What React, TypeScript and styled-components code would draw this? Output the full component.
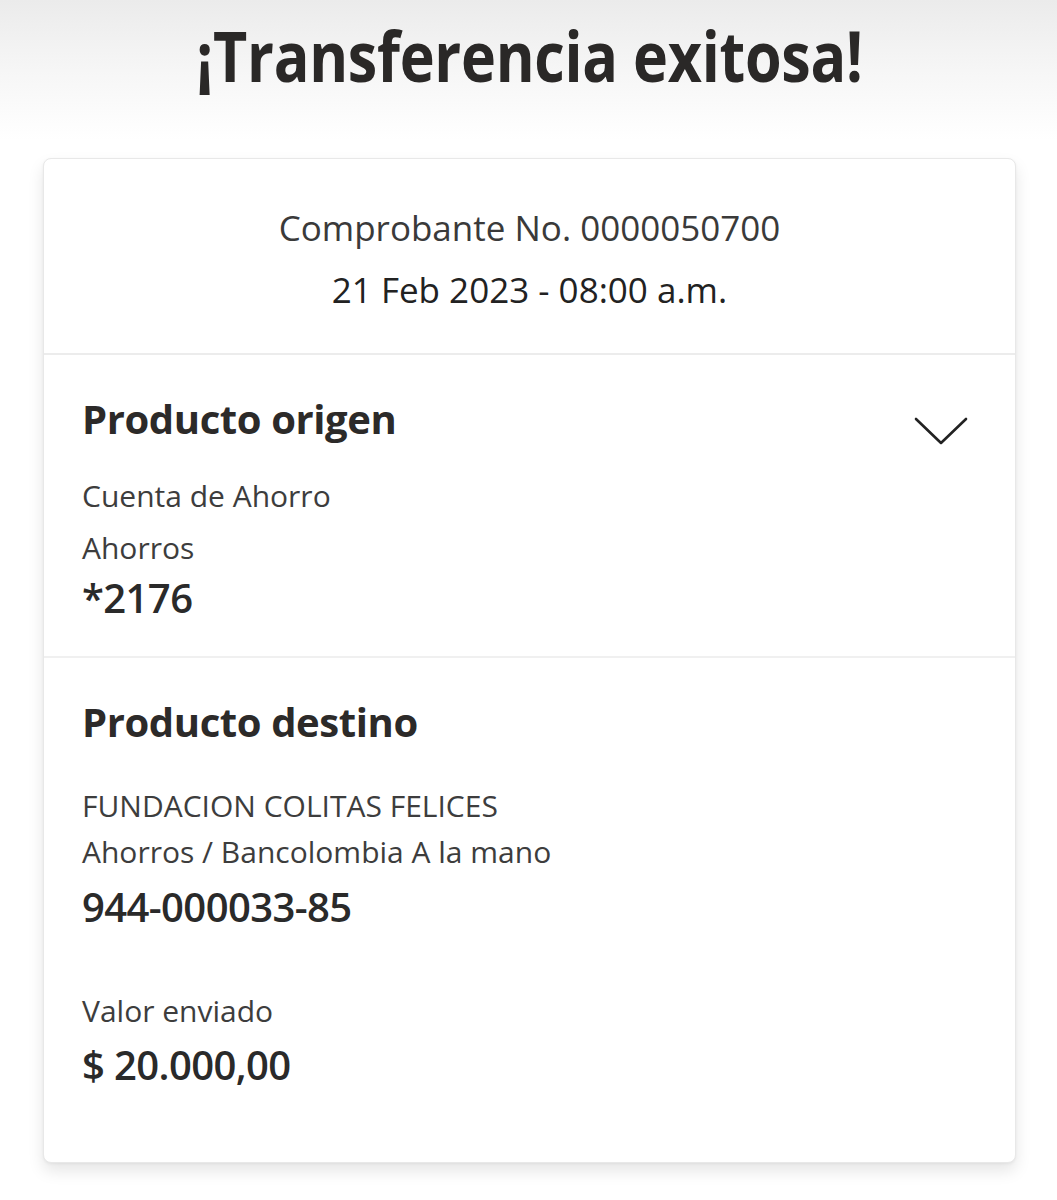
import React from "react";
import styled, { createGlobalStyle } from "styled-components";

const Global = createGlobalStyle`
  html, body { margin: 0; padding: 0; }
  body {
    background: linear-gradient(180deg, #ebebeb 0px, #f6f6f6 70px, #ffffff 140px, #ffffff 100%);
    font-family: "Open Sans", "Noto Sans", Arial, sans-serif;
    color: #2c2a29;
    min-height: 1200px;
  }
`;

const Page = styled.div`
  display: flex;
  flex-direction: column;
  align-items: stretch;
  padding: 0 41px 0 43px;
  min-height: 1200px;
  box-sizing: border-box;
`;

const Title = styled.h1`
  margin: 0;
  height: 158px;
  padding-top: 21px;
  box-sizing: border-box;
  text-align: center;
  font-size: 69px;
  line-height: 1;
  font-weight: 700;
  letter-spacing: -0.3px;
  color: #2a2827;
  white-space: nowrap;
  transform: scaleX(0.858);
`;

const Card = styled.div`
  background: #fff;
  border: 1px solid #e8e8e8;
  border-radius: 8px;
  box-shadow: 0 8px 16px rgba(0, 0, 0, 0.1), 0 1px 3px rgba(0, 0, 0, 0.05);
  overflow: hidden;
`;

const Header = styled.div`
  padding: 47px 20px 41px;
  display: flex;
  flex-direction: column;
  align-items: center;
  gap: 18px;
  border-bottom: 2px solid #ececec;
`;

const HeaderLine = styled.div<{ $dark?: boolean }>`
  font-size: 35px;
  line-height: 44px;
  color: ${(p) => (p.$dark ? "#222" : "#3a3a3a")};
`;

const Section = styled.div<{ $last?: boolean }>`
  padding: ${(p) => (p.$last ? "40px 38px 73px" : "40px 38px 34px")};
  border-bottom: ${(p) => (p.$last ? "none" : "2px solid #f0f0f0")};
  display: flex;
  flex-direction: column;
`;

const SectionHead = styled.div`
  display: flex;
  justify-content: space-between;
  align-items: flex-start;
`;

const SectionTitle = styled.h2`
  margin: 0;
  font-size: 40px;
  line-height: 48px;
  font-weight: 700;
  letter-spacing: -0.4px;
  color: #2c2a29;
`;

const Chevron = styled.svg`
  width: 56px;
  height: 32px;
  margin-top: 20px;
  margin-right: 8px;
`;

const Label = styled.div<{ $gap: number }>`
  margin-top: ${(p) => p.$gap}px;
  font-size: 30px;
  line-height: 40px;
  color: #3d3d3d;
`;

const Value = styled.div<{ $gap: number }>`
  margin-top: ${(p) => p.$gap}px;
  font-size: 40px;
  line-height: 48px;
  font-weight: 600;
  letter-spacing: -0.6px;
  color: #2a2a2a;
`;

export default function App() {
  return (
    <>
      <Global />
      <Page>
        <Title>¡Transferencia exitosa!</Title>
        <Card>
          <Header>
            <HeaderLine>Comprobante No. 0000050700</HeaderLine>
            <HeaderLine $dark>21 Feb 2023 - 08:00 a.m.</HeaderLine>
          </Header>
          <Section>
            <SectionHead>
              <SectionTitle>Producto origen</SectionTitle>
              <Chevron viewBox="0 0 56 32" fill="none">
                <path
                  d="M3 4 L28 28 L53 4"
                  stroke="#222"
                  strokeWidth="2.6"
                  strokeLinecap="round"
                  strokeLinejoin="round"
                />
              </Chevron>
            </SectionHead>
            <Label $gap={29}>Cuenta de Ahorro</Label>
            <Label $gap={12}>Ahorros</Label>
            <Value $gap={6}>*2176</Value>
          </Section>
          <Section $last>
            <SectionTitle>Producto destino</SectionTitle>
            <Label $gap={40}>FUNDACION COLITAS FELICES</Label>
            <Label $gap={6}>Ahorros / Bancolombia A la mano</Label>
            <Value $gap={11}>944-000033-85</Value>
            <Label $gap={60}>Valor enviado</Label>
            <Value $gap={10}>$ 20.000,00</Value>
          </Section>
        </Card>
      </Page>
    </>
  );
}
